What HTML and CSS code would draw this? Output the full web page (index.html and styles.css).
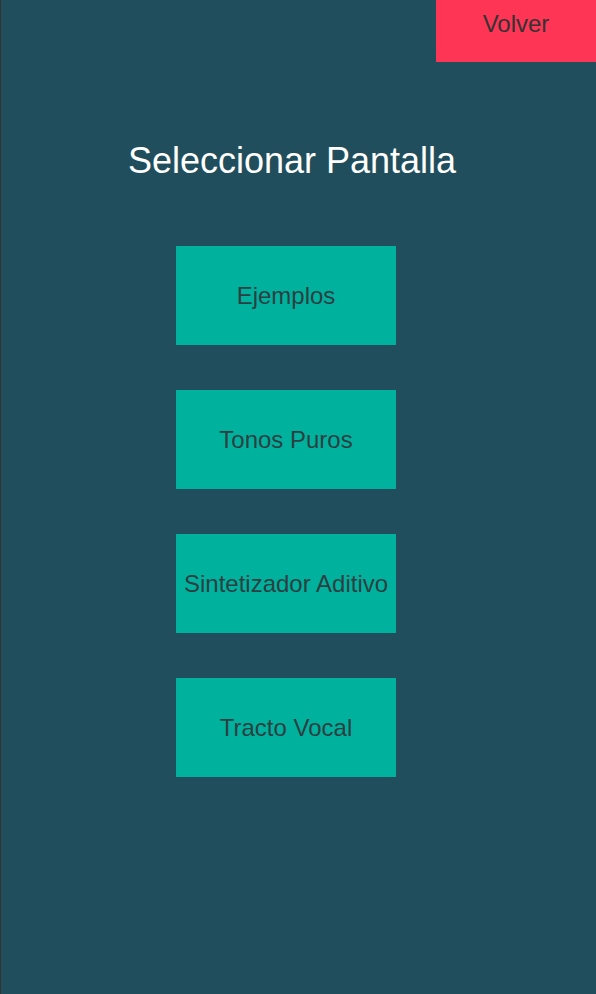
FILE: index.html
```html
<!DOCTYPE html>
<html lang="es">
<head>
<meta charset="utf-8">
<title>Seleccionar Pantalla</title>
<link rel="stylesheet" href="styles.css">
</head>
<body>
<div class="screen">
  <div class="topbar">
    <button class="back">Volver</button>
  </div>
  <h1 class="title">Seleccionar Pantalla</h1>
  <div class="menu">
    <button class="item">Ejemplos</button>
    <button class="item">Tonos Puros</button>
    <button class="item">Sintetizador Aditivo</button>
    <button class="item">Tracto Vocal</button>
  </div>
</div>
</body>
</html>
```
FILE: styles.css
```css
html, body {
  margin: 0;
  padding: 0;
}
body {
  font-family: "Liberation Sans", Arial, sans-serif;
  background: #204e5c;
}
.screen {
  box-sizing: border-box;
  width: 596px;
  height: 994px;
  background: #204e5c;
  border-left: 1px solid #333333;
  display: flex;
  flex-direction: column;
  overflow: hidden;
}
.topbar {
  display: flex;
  justify-content: flex-end;
}
.back {
  width: 160px;
  height: 62px;
  border: 0;
  margin: 0;
  padding: 0;
  background: #ff3556;
  color: #333333;
  font-family: inherit;
  font-size: 24px;
  line-height: 1;
  display: flex;
  align-items: center;
  justify-content: center;
  padding-bottom: 14px;
}
.title {
  margin: 78px 0 0 0;
  padding-left: 12px;
  padding-right: 25px;
  text-align: center;
  color: #ffffff;
  font-weight: normal;
  font-size: 36px;
  line-height: 42px;
}
.menu {
  margin-top: 64px;
  padding-right: 25px;
  display: flex;
  flex-direction: column;
  align-items: center;
  gap: 45px;
}
.item {
  width: 220px;
  height: 99px;
  border: 0;
  margin: 0;
  padding: 0;
  background: #00b19d;
  color: #2e3f42;
  font-family: inherit;
  font-size: 24px;
  line-height: 1;
  display: flex;
  align-items: center;
  justify-content: center;
}
```
